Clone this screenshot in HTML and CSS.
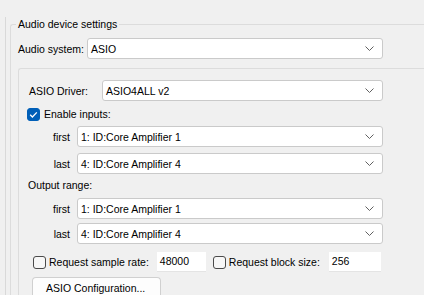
FILE: index.html
```html
<!DOCTYPE html>
<html lang="en">
<head>
    <meta charset="UTF-8">
    <meta name="viewport" content="width=device-width, initial-scale=1.0">
    <title>Audio device settings</title>
    <link rel="stylesheet" href="styles.css">
</head>
<body>

<div class="page">
    <fieldset class="group">
        <legend>Audio device settings</legend>

        <!-- Audio system -->
        <div class="row system-row">
            <span class="lbl lbl-system">Audio system:</span>
            <div class="combo combo-system">
                <span>ASIO</span>
                <svg class="chev" width="9" height="5" viewBox="0 0 9 5"><polyline points="0.5,0.5 4.5,4.5 8.5,0.5" fill="none" stroke="#606060" stroke-width="1"/></svg>
            </div>
        </div>

        <div class="panel">
            <div class="row driver-row">
                <span class="lbl lbl-driver">ASIO Driver:</span>
                <div class="combo combo-driver">
                    <span>ASIO4ALL v2</span>
                    <svg class="chev" width="9" height="5" viewBox="0 0 9 5"><polyline points="0.5,0.5 4.5,4.5 8.5,0.5" fill="none" stroke="#606060" stroke-width="1"/></svg>
                </div>
            </div>

            <!-- Inputs -->
            <div class="check-row enable-row">
                <span class="check on">
                    <svg width="13" height="13" viewBox="0 0 13 13"><polyline points="3.2,6.8 5.4,9 9.8,4.4" fill="none" stroke="#ffffff" stroke-width="1.3"/></svg>
                </span>
                <span>Enable inputs:</span>
            </div>
            <div class="row range-row in-first">
                <span class="lbl lbl-side">first</span>
                <div class="combo combo-range">
                    <span>1: ID:Core Amplifier 1</span>
                    <svg class="chev" width="9" height="5" viewBox="0 0 9 5"><polyline points="0.5,0.5 4.5,4.5 8.5,0.5" fill="none" stroke="#606060" stroke-width="1"/></svg>
                </div>
            </div>
            <div class="row range-row in-last">
                <span class="lbl lbl-side">last</span>
                <div class="combo combo-range">
                    <span>4: ID:Core Amplifier 4</span>
                    <svg class="chev" width="9" height="5" viewBox="0 0 9 5"><polyline points="0.5,0.5 4.5,4.5 8.5,0.5" fill="none" stroke="#606060" stroke-width="1"/></svg>
                </div>
            </div>

            <!-- Outputs -->
            <div class="caption output-caption">Output range:</div>
            <div class="row range-row out-first">
                <span class="lbl lbl-side">first</span>
                <div class="combo combo-range">
                    <span>1: ID:Core Amplifier 1</span>
                    <svg class="chev" width="9" height="5" viewBox="0 0 9 5"><polyline points="0.5,0.5 4.5,4.5 8.5,0.5" fill="none" stroke="#606060" stroke-width="1"/></svg>
                </div>
            </div>
            <div class="row range-row out-last">
                <span class="lbl lbl-side">last</span>
                <div class="combo combo-range">
                    <span>4: ID:Core Amplifier 4</span>
                    <svg class="chev" width="9" height="5" viewBox="0 0 9 5"><polyline points="0.5,0.5 4.5,4.5 8.5,0.5" fill="none" stroke="#606060" stroke-width="1"/></svg>
                </div>
            </div>

            <!-- Sample rate / block size -->
            <div class="row request-row">
                <span class="check"></span>
                <span class="req-text">Request sample rate:</span>
                <div class="edit edit-rate">48000</div>
                <span class="check check-block"></span>
                <span class="req-text">Request block size:</span>
                <div class="edit edit-block">256</div>
            </div>

            <button class="config-btn">ASIO Configuration...</button>
        </div>
    </fieldset>
</div>

</body>
</html>
```

FILE: styles.css
```css
/* Global styling */
html, body {
    margin: 0;
    padding: 0;
    height: 100%;
    overflow: hidden;
}

body {
    font-family: 'Liberation Sans', Arial, sans-serif;
    font-size: 10.5px;
    color: #000000;
    background-color: #f0f0f0;
}

.page {
    box-sizing: border-box;
    display: flex;
    flex-direction: column;
    height: 278px;
    margin: 17px 0 0 5px;
    border-left: 1px solid #d9d9d9;
}

/* Group box (continues past the right and bottom edges) */
.group {
    flex: 1;
    display: flex;
    flex-direction: column;
    min-width: 0;
    margin: 0 0 0 4px;
    padding: 0 0 0 7px;
    border: 1px solid #dcdcdc;
    border-right: none;
    border-bottom: none;
    border-radius: 3px 0 0 0;
}

.group legend {
    margin-left: -2px;
    padding: 0 2px;
    line-height: 14px;
}

.row {
    display: flex;
    align-items: center;
}

.lbl {
    flex-shrink: 0;
}

/* Combo boxes */
.combo {
    display: flex;
    align-items: center;
    justify-content: space-between;
    box-sizing: border-box;
    height: 21px;
    padding: 0 8px 0 3px;
    background-color: #ffffff;
    border: 1px solid #cacaca;
    border-radius: 3px;
}

.chev {
    display: block;
}

.system-row {
    margin-top: 7px;
}

.lbl-system {
    width: 69px;
}

.combo-system {
    width: 296px;
}

/* Inner panel */
.panel {
    flex: 1;
    margin-top: 9px;
    padding: 11px 0 0 8px;
    border: 1px solid #dcdcdc;
    border-right: none;
    border-bottom: none;
    border-radius: 3px 0 0 0;
}

.lbl-driver {
    width: 73px;
    margin-left: 2px;
    box-sizing: border-box;
}

.combo-driver {
    width: 281px;
}

.check-row {
    display: flex;
    align-items: center;
    height: 16px;
}

.enable-row {
    margin-top: 5px;
}

.check {
    box-sizing: border-box;
    width: 13px;
    height: 13px;
    flex-shrink: 0;
    border: 1px solid #4a4a4a;
    border-radius: 3px;
    background-color: #f7f7f7;
}

.check svg {
    display: block;
    margin: -1px;
}

.check.on {
    border-color: #005fb8;
    background-color: #005fb8;
}

.enable-row .check {
    margin-right: 4px;
}

.lbl-side {
    width: 43px;
    text-align: right;
    margin-right: 7px;
}

.combo-range {
    width: 306px;
}

.in-first {
    margin-top: 4px;
}

.in-last {
    margin-top: 6px;
}

.caption {
    height: 16px;
    line-height: 16px;
}

.output-caption {
    margin: 3px 0 0 1px;
}

.out-first {
    margin-top: 5px;
}

.out-last {
    margin-top: 4px;
}

/* Request row */
.request-row {
    margin: 8px 0 0 6px;
    height: 20px;
}

.req-text {
    margin-left: 3px;
}

.edit {
    box-sizing: border-box;
    height: 20px;
    line-height: 19px;
    padding-left: 3px;
    background-color: #ffffff;
    border-bottom: 1px solid #e4e4e4;
}

.edit-rate {
    width: 49px;
    margin-left: 8px;
}

.check-block {
    margin-left: 7px;
}

.edit-block {
    width: 52px;
    margin-left: 9px;
}

/* Button (cut off by the window bottom) */
.config-btn {
    display: block;
    box-sizing: border-box;
    width: 129px;
    height: 18px;
    margin: 5px 0 0 5px;
    padding: 3px 0 0 13px;
    text-align: left;
    vertical-align: top;
    line-height: 14px;
    font-family: inherit;
    font-size: inherit;
    color: #000000;
    background-color: #fdfdfd;
    border: 1px solid #d0d0d0;
    border-bottom: none;
    border-radius: 4px 4px 0 0;
}
```
